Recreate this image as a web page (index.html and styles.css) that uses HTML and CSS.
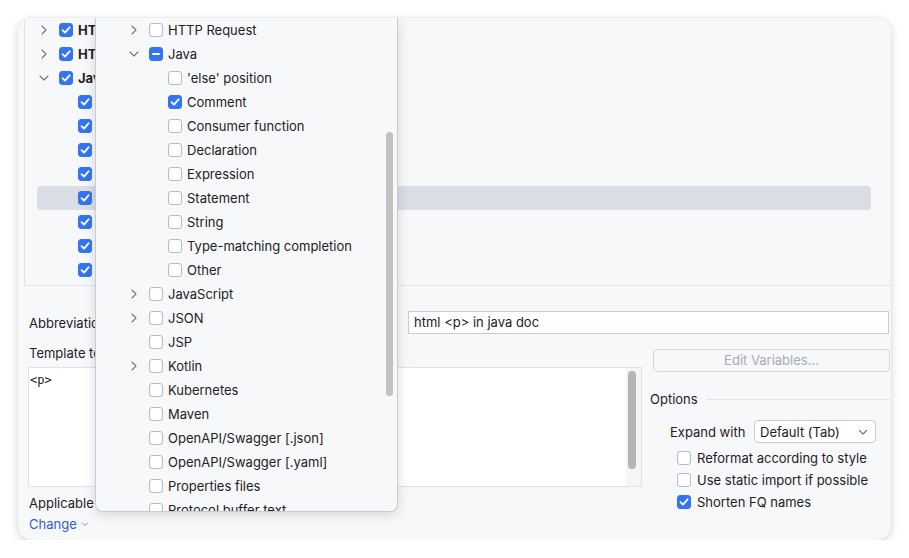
FILE: index.html
```html
<!DOCTYPE html>
<html>
<head>
<meta charset="utf-8">
<link rel="stylesheet" href="styles.css">
</head>
<body>
<div class="window">
  <div class="tree">
    <div class="trow l0"><svg class="chev" viewBox="0 0 10 10"><path d="M3 1L7 5L3 9"/></svg><span class="cb on"><svg viewBox="0 0 14 14"><path d="M3.5 7.2L6 9.6L10.6 4.3"/></svg></span><span class="bold">HTML/XML</span></div>
    <div class="trow l0"><svg class="chev" viewBox="0 0 10 10"><path d="M3 1L7 5L3 9"/></svg><span class="cb on"><svg viewBox="0 0 14 14"><path d="M3.5 7.2L6 9.6L10.6 4.3"/></svg></span><span class="bold">HTTP Request</span></div>
    <div class="trow l0"><svg class="chev" viewBox="0 0 10 10"><path d="M1 3L5 7L9 3"/></svg><span class="cb on"><svg viewBox="0 0 14 14"><path d="M3.5 7.2L6 9.6L10.6 4.3"/></svg></span><span class="bold">Java</span></div>
    <div class="trow l1"><span class="chev-gap"></span><span class="cb on"><svg viewBox="0 0 14 14"><path d="M3.5 7.2L6 9.6L10.6 4.3"/></svg></span><span>fori</span></div>
    <div class="trow l1"><span class="chev-gap"></span><span class="cb on"><svg viewBox="0 0 14 14"><path d="M3.5 7.2L6 9.6L10.6 4.3"/></svg></span><span>ifn</span></div>
    <div class="trow l1"><span class="chev-gap"></span><span class="cb on"><svg viewBox="0 0 14 14"><path d="M3.5 7.2L6 9.6L10.6 4.3"/></svg></span><span>inn</span></div>
    <div class="trow l1"><span class="chev-gap"></span><span class="cb on"><svg viewBox="0 0 14 14"><path d="M3.5 7.2L6 9.6L10.6 4.3"/></svg></span><span>inst</span></div>
    <div class="trow l1 sel"><span class="chev-gap"></span><span class="cb on"><svg viewBox="0 0 14 14"><path d="M3.5 7.2L6 9.6L10.6 4.3"/></svg></span><span>&lt;p&gt;</span></div>
    <div class="trow l1"><span class="chev-gap"></span><span class="cb on"><svg viewBox="0 0 14 14"><path d="M3.5 7.2L6 9.6L10.6 4.3"/></svg></span><span>itar</span></div>
    <div class="trow l1"><span class="chev-gap"></span><span class="cb on"><svg viewBox="0 0 14 14"><path d="M3.5 7.2L6 9.6L10.6 4.3"/></svg></span><span>itco</span></div>
    <div class="trow l1"><span class="chev-gap"></span><span class="cb on"><svg viewBox="0 0 14 14"><path d="M3.5 7.2L6 9.6L10.6 4.3"/></svg></span><span>iter</span></div>
  </div>

  <div class="form">
    <div class="abbr-row">
      <span class="abbr-label">Abbreviation:</span>
      <div class="input">html &lt;p&gt; in java doc</div>
    </div>
    <div class="cols">
      <div class="left">
        <div class="label">Template text:</div>
        <div class="textarea">
          <div class="code">&lt;p&gt;</div>
          <div class="vtrack"><div class="vthumb"></div></div>
        </div>
        <div class="label applicable">Applicable in Java: comment.</div>
        <div class="change">Change <svg class="link-chev" viewBox="0 0 8 8"><path d="M1 2.5L4 5.5L7 2.5"/></svg></div>
      </div>
      <div class="right">
        <div class="button">Edit Variables...</div>
        <div class="options-head"><span>Options</span><span class="sep"></span></div>
        <div class="expand-row">
          <span class="expand-label">Expand with</span>
          <div class="dropdown"><span>Default (Tab)</span><svg class="dd-chev" viewBox="0 0 10 10"><path d="M1.5 3.5L5 7L8.5 3.5"/></svg></div>
        </div>
        <div class="opt"><span class="cb"></span><span>Reformat according to style</span></div>
        <div class="opt"><span class="cb"></span><span>Use static import if possible</span></div>
        <div class="opt"><span class="cb on"><svg viewBox="0 0 14 14"><path d="M3.5 7.2L6 9.6L10.6 4.3"/></svg></span><span>Shorten FQ names</span></div>
      </div>
    </div>
  </div>

  <div class="popup">
    <div class="prow p1"><svg class="chev" viewBox="0 0 10 10"><path d="M3 1L7 5L3 9"/></svg><span class="cb"></span><span>HTTP Request</span></div>
    <div class="prow p1"><svg class="chev" viewBox="0 0 10 10"><path d="M1 3L5 7L9 3"/></svg><span class="cb mixed"><span class="bar"></span></span><span>Java</span></div>
    <div class="prow p2"><span class="chev-gap"></span><span class="cb"></span><span>'else' position</span></div>
    <div class="prow p2"><span class="chev-gap"></span><span class="cb on"><svg viewBox="0 0 14 14"><path d="M3.5 7.2L6 9.6L10.6 4.3"/></svg></span><span>Comment</span></div>
    <div class="prow p2"><span class="chev-gap"></span><span class="cb"></span><span>Consumer function</span></div>
    <div class="prow p2"><span class="chev-gap"></span><span class="cb"></span><span>Declaration</span></div>
    <div class="prow p2"><span class="chev-gap"></span><span class="cb"></span><span>Expression</span></div>
    <div class="prow p2"><span class="chev-gap"></span><span class="cb"></span><span>Statement</span></div>
    <div class="prow p2"><span class="chev-gap"></span><span class="cb"></span><span>String</span></div>
    <div class="prow p2"><span class="chev-gap"></span><span class="cb"></span><span>Type-matching completion</span></div>
    <div class="prow p2"><span class="chev-gap"></span><span class="cb"></span><span>Other</span></div>
    <div class="prow p1"><svg class="chev" viewBox="0 0 10 10"><path d="M3 1L7 5L3 9"/></svg><span class="cb"></span><span>JavaScript</span></div>
    <div class="prow p1"><svg class="chev" viewBox="0 0 10 10"><path d="M3 1L7 5L3 9"/></svg><span class="cb"></span><span>JSON</span></div>
    <div class="prow p1"><span class="chev-gap"></span><span class="cb"></span><span>JSP</span></div>
    <div class="prow p1"><svg class="chev" viewBox="0 0 10 10"><path d="M3 1L7 5L3 9"/></svg><span class="cb"></span><span>Kotlin</span></div>
    <div class="prow p1"><span class="chev-gap"></span><span class="cb"></span><span>Kubernetes</span></div>
    <div class="prow p1"><span class="chev-gap"></span><span class="cb"></span><span>Maven</span></div>
    <div class="prow p1"><span class="chev-gap"></span><span class="cb"></span><span>OpenAPI/Swagger [.json]</span></div>
    <div class="prow p1"><span class="chev-gap"></span><span class="cb"></span><span>OpenAPI/Swagger [.yaml]</span></div>
    <div class="prow p1"><span class="chev-gap"></span><span class="cb"></span><span>Properties files</span></div>
    <div class="prow p1"><span class="chev-gap"></span><span class="cb"></span><span>Protocol buffer text</span></div>
    <div class="pscroll"></div>
  </div>
</div>
</body>
</html>
```

FILE: styles.css
```css
* { box-sizing: border-box; }

body {
  margin: 0;
  background: #ffffff;
  font-family: Inter, "Noto Sans", sans-serif;
  font-size: 13px;
  color: #1f2023;
}

.window {
  position: relative;
  margin: 18px 0 0 18px;
  width: 873px;
  height: 522px;
  background: #f7f8fa;
  border-radius: 14px;
  overflow: hidden;
  box-shadow: 0 2px 10px rgba(0, 0, 0, 0.16), 0 0 2px rgba(0, 0, 0, 0.08);
}

/* tree */
.tree {
  margin-left: 6px;
  height: 268px;
  border-left: 1px solid #e2e4e8;
  border-bottom: 1px solid #e2e4e8;
}

.trow {
  height: 24px;
  display: flex;
  align-items: center;
  margin: 0 20px 0 12px;
  border-radius: 4px;
}

.trow.l0 { padding-left: 2px; }
.trow.l1 { padding-left: 21px; }
.trow.sel { background: #dadde3; }

.chev {
  width: 10px;
  height: 10px;
  flex: none;
  margin-right: 10px;
  fill: none;
  stroke: #6f737a;
  stroke-width: 1.1;
  stroke-linecap: round;
  stroke-linejoin: round;
}

.chev-gap {
  width: 10px;
  flex: none;
  margin-right: 10px;
}

.cb {
  width: 14px;
  height: 14px;
  flex: none;
  border: 1px solid #b7bbc6;
  border-radius: 3px;
  background: #ffffff;
  margin-right: 5px;
  display: flex;
  align-items: center;
  justify-content: center;
}

.cb.on, .cb.mixed {
  background: #3574f0;
  border-color: #3574f0;
}

.cb svg {
  width: 14px;
  height: 14px;
  flex: none;
  fill: none;
  stroke: #ffffff;
  stroke-width: 1.8;
  stroke-linecap: round;
  stroke-linejoin: round;
}

.cb .bar {
  width: 8px;
  height: 2px;
  background: #ffffff;
  border-radius: 1px;
}

.bold { font-weight: 700; }

/* form */
.form {
  padding: 0 1px 0 10px;
}

.abbr-row {
  margin-top: 25px;
  display: flex;
  align-items: center;
  height: 23px;
}

.abbr-label {
  width: 380px;
  padding-left: 1px;
  flex: none;
}

.input {
  width: 481px;
  height: 23px;
  flex: none;
  background: #ffffff;
  border: 1px solid #c9ccd6;
  padding-left: 5px;
  line-height: 21px;
}

.cols {
  display: flex;
  margin-top: 11px;
}

.left {
  width: 614px;
  flex: none;
}

.label {
  padding-left: 1px;
  line-height: 16px;
  height: 16px;
}

.textarea {
  margin-top: 6px;
  height: 120px;
  background: #ffffff;
  border: 1px solid #e0e2e6;
  display: flex;
}

.code {
  flex: 1;
  padding: 4px 0 0 1px;
  font-family: "DejaVu Sans Mono", "Liberation Mono", monospace;
  font-size: 12px;
  line-height: 16px;
}

.vtrack {
  width: 15px;
  flex: none;
  background: #f4f5f6;
  padding: 3px 0 0 2px;
}

.vthumb {
  width: 8px;
  height: 98px;
  border-radius: 4px;
  background: #b5b5b7;
}

.applicable { margin-top: 8px; }

.change {
  margin-top: 5px;
  padding-left: 1px;
  line-height: 16px;
  color: #2f5ecf;
  display: flex;
  align-items: center;
}

.link-chev {
  width: 8px;
  height: 8px;
  margin-left: 4px;
  fill: none;
  stroke: #8d93a0;
  stroke-width: 1;
}

.right {
  margin-left: 8px;
  width: 240px;
  flex: none;
}

.button {
  margin: 4px 0 0 3px;
  height: 23px;
  border: 1px solid #d5d7dd;
  border-radius: 4px;
  color: #a6abb7;
  text-align: center;
  line-height: 21px;
}

.options-head {
  margin-top: 19px;
  height: 16px;
  display: flex;
  align-items: center;
}

.sep {
  flex: 1;
  height: 1px;
  background: #e2e4e8;
  margin-left: 8px;
}

.expand-row {
  margin-top: 13px;
  padding-left: 20px;
  display: flex;
  align-items: center;
  height: 23px;
}

.expand-label {
  width: 84px;
  flex: none;
}

.dropdown {
  width: 122px;
  height: 23px;
  border: 1px solid #c9ccd6;
  border-radius: 4px;
  background: #ffffff;
  display: flex;
  align-items: center;
  justify-content: space-between;
  padding: 0 7px 0 5px;
}

.dd-chev {
  width: 10px;
  height: 10px;
  fill: none;
  stroke: #6f737a;
  stroke-width: 1.1;
  stroke-linecap: round;
  stroke-linejoin: round;
}

.opt {
  height: 22px;
  display: flex;
  align-items: center;
  padding-left: 27px;
}

.expand-row + .opt { margin-top: 4px; }

.opt .cb { margin-right: 6px; }

/* popup */
.popup {
  position: absolute;
  left: 77px;
  top: 0;
  width: 303px;
  height: 494px;
  background: #f7f8fa;
  border: 1px solid #c8cbd3;
  border-top: none;
  border-radius: 0 0 8px 8px;
  box-shadow: 0 3px 12px rgba(0, 0, 0, 0.14);
  overflow: hidden;
}

.prow {
  height: 24px;
  display: flex;
  align-items: center;
  white-space: nowrap;
}

.prow.p1 { padding-left: 33px; }
.prow.p2 { padding-left: 52px; }

.pscroll {
  position: absolute;
  left: 290px;
  top: 114px;
  width: 7px;
  height: 264px;
  border-radius: 4px;
  background: #c2c2c4;
}
```
